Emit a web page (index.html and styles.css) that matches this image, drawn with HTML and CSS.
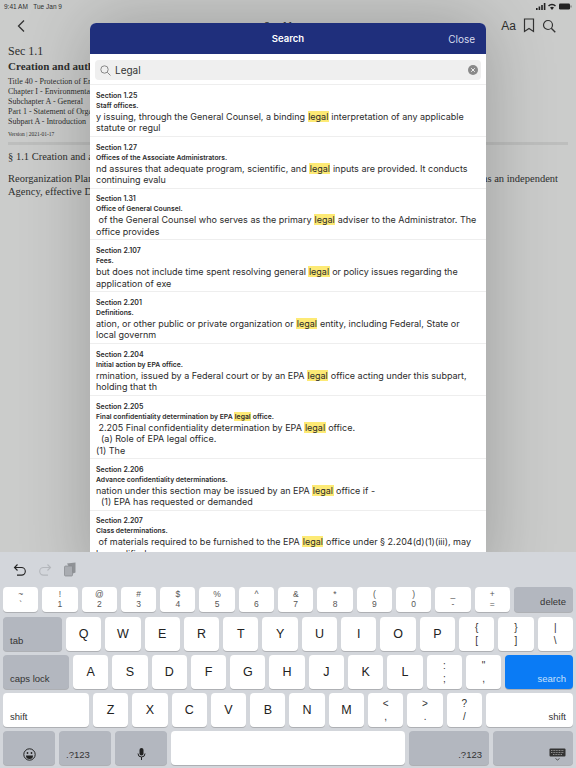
FILE: index.html
```html
<!DOCTYPE html>
<html lang="en">
<head>
    <meta charset="UTF-8">
    <meta name="viewport" content="width=device-width, initial-scale=1.0">
    <title>Search</title>
    <link rel="stylesheet" href="styles.css">
</head>
<body>

    <div class="screen">
        <!-- Reader behind the search sheet -->
        <div class="reader">
            <div class="status">
                <span>9:41 AM&nbsp;&nbsp;&nbsp;Tue Jan 9</span>
                <svg width="37" height="9" viewBox="0 0 37 9">
                    <rect x="1" y="6" width="1.6" height="2" fill="#222"/><rect x="3.6" y="4.5" width="1.6" height="3.5" fill="#222"/><rect x="6.2" y="3" width="1.6" height="5" fill="#222"/><rect x="8.8" y="1" width="1.6" height="7" fill="#222"/>
                    <path d="M13 3.4a6 6 0 0 1 8 0l-1 1.1a4.5 4.5 0 0 0-6 0zM15 5.5a3.200 3.200 0 0 1 4 0l-2 2.500z" fill="#222"/>
                    <rect x="24" y="1.500" width="11" height="6" rx="1.200" fill="#222"/><rect x="35.500" y="3.500" width="1" height="2" fill="#666"/>
                </svg>
            </div>
            <div class="nav">
                <svg width="10" height="14" viewBox="0 0 10 14"><path d="M8 1.500 2.500 7 8 12.500" fill="none" stroke="#333" stroke-width="1.300"/></svg>
                <div class="nav-title">Sec 1.1</div>
                <div class="nav-tools">
                    <span class="aa">Aa</span>
                    <svg width="12" height="15" viewBox="0 0 12 15"><path d="M1.500 1h9v12.500L6 10.500l-4.500 3z" fill="none" stroke="#333" stroke-width="1.200"/></svg>
                    <svg width="14" height="14" viewBox="0 0 14 14"><circle cx="6" cy="6" r="4.500" fill="none" stroke="#333" stroke-width="1.200"/><path d="m9.300 9.300 4 4" stroke="#333" stroke-width="1.300"/></svg>
                </div>
            </div>
            <div class="doc">
                <h2 class="sec">Sec 1.1</h2>
                <h1 class="doc-title">Creation and auth</h1>
                <div class="crumbs">
                    <div>Title 40 - Protection of En</div>
                    <div>Chapter I - Environmental</div>
                    <div>Subchapter A - General</div>
                    <div>Part 1 - Statement of Orga</div>
                    <div>Subpart A - Introduction</div>
                </div>
                <div class="version">Version | 2021-01-17</div>
                <div class="rule"></div>
                <p class="lead">§ 1.1 Creation and a</p>
                <div class="para-first">
                    <span>Reorganization Plan</span>
                    <span>as an independent</span>
                </div>
                <p class="para-last">Agency, effective De</p>
            </div>
        </div>

        <!-- Search sheet -->
        <div class="sheet">
            <div class="sheet-head">
                <span class="sheet-title">Search</span>
                <span class="sheet-close">Close</span>
            </div>
            <div class="search-wrap">
                <div class="search-box">
                    <svg width="11" height="11" viewBox="0 0 11 11"><circle cx="4.500" cy="4.500" r="3.700" fill="none" stroke="#888" stroke-width="1"/><path d="m7.300 7.300 3.200 3.200" stroke="#888" stroke-width="1"/></svg>
                    <span class="search-text">Legal</span>
                    <svg class="search-clear" width="10" height="10" viewBox="0 0 10 10"><circle cx="5" cy="5" r="5" fill="#8a8a8a"/><path d="m3.200 3.200 3.600 3.600M6.800 3.200 3.200 6.800" stroke="#eee" stroke-width="1"/></svg>
                </div>
            </div>

            <div class="result">
                <div class="r-sec">Section 1.25</div>
                <div class="r-name">Staff offices.</div>
                <div class="r-line">y issuing, through the General Counsel, a binding <mark>legal</mark> interpretation of any applicable</div>
                <div class="r-line">statute or regul</div>
            </div>
            <div class="result">
                <div class="r-sec">Section 1.27</div>
                <div class="r-name">Offices of the Associate Administrators.</div>
                <div class="r-line">nd assures that adequate program, scientific, and <mark>legal</mark> inputs are provided. It conducts</div>
                <div class="r-line">continuing evalu</div>
            </div>
            <div class="result">
                <div class="r-sec">Section 1.31</div>
                <div class="r-name">Office of General Counsel.</div>
                <div class="r-line"> of the General Counsel who serves as the primary <mark>legal</mark> adviser to the Administrator. The</div>
                <div class="r-line">office provides</div>
            </div>
            <div class="result">
                <div class="r-sec">Section 2.107</div>
                <div class="r-name">Fees.</div>
                <div class="r-line">but does not include time spent resolving general <mark>legal</mark> or policy issues regarding the</div>
                <div class="r-line">application of exe</div>
            </div>
            <div class="result">
                <div class="r-sec">Section 2.201</div>
                <div class="r-name">Definitions.</div>
                <div class="r-line">ation, or other public or private organization or <mark>legal</mark> entity, including Federal, State or</div>
                <div class="r-line">local governm</div>
            </div>
            <div class="result">
                <div class="r-sec">Section 2.204</div>
                <div class="r-name">Initial action by EPA office.</div>
                <div class="r-line">rmination, issued by a Federal court or by an EPA <mark>legal</mark> office acting under this subpart,</div>
                <div class="r-line">holding that th</div>
            </div>
            <div class="result result-tall">
                <div class="r-sec">Section 2.205</div>
                <div class="r-name">Final confidentiality determination by EPA <mark>legal</mark> office.</div>
                <div class="r-line"> 2.205 Final confidentiality determination by EPA <mark>legal</mark> office.</div>
                <div class="r-line">  (a) Role of EPA legal office.</div>
                <div class="r-line">(1) The</div>
            </div>
            <div class="result">
                <div class="r-sec">Section 2.206</div>
                <div class="r-name">Advance confidentiality determinations.</div>
                <div class="r-line">nation under this section may be issued by an EPA <mark>legal</mark> office if -</div>
                <div class="r-line">  (1) EPA has requested or demanded</div>
            </div>
            <div class="result">
                <div class="r-sec">Section 2.207</div>
                <div class="r-name">Class determinations.</div>
                <div class="r-line"> of materials required to be furnished to the EPA <mark>legal</mark> office under § 2.204(d)(1)(iii), may</div>
                <div class="r-line">be modified</div>
            </div>
        </div>

        <!-- Keyboard -->
        <div class="keyboard">
            <div class="kb-tools">
                <svg width="14" height="14" viewBox="0 0 14 14"><path d="M4.500 1.500 1.500 4.500l3 3M1.500 4.500h7a3.800 3.800 0 0 1 0 7.600H4" fill="none" stroke="#222" stroke-width="1.100"/></svg>
                <svg width="14" height="14" viewBox="0 0 14 14"><path d="m9.500 1.500 3 3-3 3M12.500 4.500h-7a3.800 3.800 0 0 0 0 7.600H10" fill="none" stroke="#b4b7bc" stroke-width="1.100"/></svg>
                <svg width="14" height="15" viewBox="0 0 14 15"><path d="M4 1.500 12.500.5v10L10 11.500z" fill="#8f9296"/><rect x="1.500" y="4" width="8" height="10" rx="1" fill="#a9acb1" stroke="#85888c" stroke-width=".7"/></svg>
            </div>
            <div class="kb-row">
                <div class="key num"><span>~</span><span>`</span></div>
                <div class="key num"><span>!</span><span>1</span></div>
                <div class="key num"><span>@</span><span>2</span></div>
                <div class="key num"><span>#</span><span>3</span></div>
                <div class="key num"><span>$</span><span>4</span></div>
                <div class="key num"><span>%</span><span>5</span></div>
                <div class="key num"><span>^</span><span>6</span></div>
                <div class="key num"><span>&amp;</span><span>7</span></div>
                <div class="key num"><span>*</span><span>8</span></div>
                <div class="key num"><span>(</span><span>9</span></div>
                <div class="key num"><span>)</span><span>0</span></div>
                <div class="key num"><span>_</span><span>-</span></div>
                <div class="key num"><span>+</span><span>=</span></div>
                <div class="key mod wide right">delete</div>
            </div>
            <div class="kb-row tall">
                <div class="key mod tab">tab</div>
                <div class="key">Q</div><div class="key">W</div><div class="key">E</div><div class="key">R</div><div class="key">T</div>
                <div class="key">Y</div><div class="key">U</div><div class="key">I</div><div class="key">O</div><div class="key">P</div>
                <div class="key num big"><span>{</span><span>[</span></div>
                <div class="key num big"><span>}</span><span>]</span></div>
                <div class="key num big"><span>|</span><span>\</span></div>
            </div>
            <div class="kb-row tall">
                <div class="key mod caps">caps lock</div>
                <div class="key">A</div><div class="key">S</div><div class="key">D</div><div class="key">F</div><div class="key">G</div>
                <div class="key">H</div><div class="key">J</div><div class="key">K</div><div class="key">L</div>
                <div class="key num big"><span>:</span><span>;</span></div>
                <div class="key num big"><span>"</span><span>,</span></div>
                <div class="key go wide right">search</div>
            </div>
            <div class="kb-row tall">
                <div class="key label shift">shift</div>
                <div class="key">Z</div><div class="key">X</div><div class="key">C</div><div class="key">V</div><div class="key">B</div>
                <div class="key">N</div><div class="key">M</div>
                <div class="key num big"><span>&lt;</span><span>,</span></div>
                <div class="key num big"><span>&gt;</span><span>.</span></div>
                <div class="key num big"><span>?</span><span>/</span></div>
                <div class="key label wide right">shift</div>
            </div>
            <div class="kb-row tall">
                <div class="key mod icon emoji">
                    <svg width="13" height="13" viewBox="0 0 13 13"><circle cx="6.500" cy="6.500" r="5.700" fill="none" stroke="#222" stroke-width="1"/><circle cx="4.500" cy="5" r=".9" fill="#222"/><circle cx="8.500" cy="5" r=".9" fill="#222"/><path d="M3 7.500h7a3.500 3.500 0 0 1-7 0z" fill="#222"/></svg>
                </div>
                <div class="key mod symbols">.?123</div>
                <div class="key mod icon mic">
                    <svg width="9" height="14" viewBox="0 0 9 14"><rect x="2.500" y="1" width="4" height="7.500" rx="2" fill="#222"/><path d="M1 6.500a3.500 3.500 0 0 0 7 0M4.500 10v3" fill="none" stroke="#222" stroke-width="1"/></svg>
                </div>
                <div class="key wide"></div>
                <div class="key mod symbols-r right">.?123</div>
                <div class="key mod icon hide">
                    <svg width="17" height="13" viewBox="0 0 17 13"><rect x=".5" y=".5" width="16" height="8" rx="1" fill="#333"/><path d="M2 2.500h13M2 4.500h13M4 6.500h9" stroke="#ccc" stroke-width=".6" stroke-dasharray="1 .6"/><path d="m6.500 10.500 2 1.500 2-1.500" fill="none" stroke="#333" stroke-width=".8"/></svg>
                </div>
            </div>
        </div>
    </div>

</body>
</html>
```
FILE: styles.css
```css
* {
    box-sizing: border-box;
}
body {
    margin: 0;
    font-family: "Inter", "Liberation Sans", sans-serif;
    background-color: #cbcccb;
}
.screen {
    width: 576px;
    height: 768px;
    position: relative;
    overflow: hidden;
    display: flex;
    flex-direction: column;
}

/* Reader behind the sheet */
.reader {
    height: 552px;
    flex: none;
    background-color: #cbcccb;
    color: #2e2f2e;
}
.status {
    height: 12px;
    padding: 1px 4px 0 4px;
    display: flex;
    justify-content: space-between;
    align-items: center;
    font-size: 6.5px;
    font-family: "Liberation Sans", sans-serif;
}
.nav {
    height: 27px;
    padding: 0 20px 0 16px;
    display: flex;
    align-items: center;
    position: relative;
}
.nav-title {
    position: absolute;
    left: 264px;
    top: 8px;
    font-size: 9px;
}
.nav-tools {
    margin-left: auto;
    display: flex;
    align-items: center;
    gap: 7px;
}
.aa {
    font-size: 12px;
    font-family: "Liberation Sans", sans-serif;
}
.doc {
    padding: 5px 8px 0 8px;
    font-family: "Liberation Serif", serif;
}
.sec {
    margin: 0;
    font-size: 12px;
    font-weight: normal;
    line-height: 14px;
}
.doc-title {
    margin: 1px 0 0 0;
    font-size: 11px;
    line-height: 14px;
}
.crumbs {
    margin-top: 3.500px;
    font-size: 8px;
    line-height: 10.100px;
}
.version {
    margin-top: 2px;
    font-size: 5.500px;
    line-height: 10px;
}
.rule {
    height: 3px;
    margin-top: 3px;
    background-color: #bdbebd;
}
.lead {
    margin: 5px 0 0 0;
    font-size: 10.500px;
    line-height: 13px;
}
.para-first {
    margin-top: 9px;
    width: 550px;
    font-size: 10.500px;
    line-height: 13px;
    display: flex;
    justify-content: space-between;
}
.para-last {
    margin: 0;
    font-size: 10.500px;
    line-height: 13px;
}

/* Search sheet */
.sheet {
    position: absolute;
    left: 90px;
    top: 23px;
    width: 396px;
    height: 560px;
    background-color: white;
    border-radius: 6px 6px 0 0;
    overflow: hidden;
    box-shadow: 0 0 70px rgba(0, 0, 0, 0.24);
}
.sheet-head {
    height: 31px;
    background-color: #1f2f7c;
    position: relative;
    display: flex;
    justify-content: center;
    align-items: center;
    color: white;
    font-size: 9.500px;
}
.sheet-title {
    font-weight: 600;
}
.sheet-close {
    position: absolute;
    right: 11px;
    font-size: 10px;
    color: #d7dbec;
}
.search-wrap {
    height: 31px;
    padding: 6px 5px 5px 5px;
    border-bottom: 1px solid #eeeeee;
}
.search-box {
    height: 20px;
    padding: 0 3px 0 5px;
    background-color: #efefef;
    border-radius: 4px;
    display: flex;
    align-items: center;
    gap: 4px;
    font-size: 10px;
    color: #333;
}
.search-clear {
    margin-left: auto;
}
.result {
    padding: 5.800px 6px 0 6px;
    height: 51.800px;
    border-bottom: 1px solid #eeeeee;
    color: #2b2b2b;
}
.result-tall {
    height: 63px;
}
.r-sec {
    font-size: 7px;
    font-weight: 600;
    line-height: 10px;
}
.r-name {
    font-size: 6.800px;
    font-weight: 600;
    line-height: 10px;
}
.r-line {
    font-size: 9px;
    line-height: 11.500px;
    white-space: pre;
}
mark {
    background-color: #fdea75;
    color: inherit;
    padding: 0 0.500px;
}

/* Keyboard */
.keyboard {
    flex: 1;
    position: relative;
    z-index: 5;
    background-color: #d3d6db;
    padding: 0 3px;
    font-family: "Liberation Sans", sans-serif;
}
.kb-tools {
    height: 35px;
    padding-left: 10px;
    display: flex;
    align-items: center;
    gap: 11px;
}
.kb-row {
    height: 25px;
    display: flex;
    gap: 4px;
    margin-bottom: 5px;
}
.kb-row.tall {
    height: 34px;
    margin-bottom: 4px;
}
.key {
    width: 35.300px;
    flex: none;
    background-color: white;
    border-radius: 4px;
    box-shadow: 0 1px 0 #aeb0b4;
    display: flex;
    justify-content: center;
    align-items: center;
    font-size: 12.500px;
    color: #222;
}
.key.num {
    flex-direction: column;
    gap: 1px;
    font-size: 8.500px;
    line-height: 9px;
    color: #555;
}
.key.num.big {
    font-size: 10px;
    line-height: 12px;
    color: #333;
}
.key.mod, .key.label, .key.go {
    align-items: flex-end;
    justify-content: flex-start;
    padding: 0 7px 5px 7px;
    font-size: 9.500px;
    color: #333;
}
.key.mod {
    background-color: #b3b7bf;
}
.key.go {
    background-color: #0a7bf5;
    color: #c7e0fb;
}
.wide {
    flex: 1;
}
.key.right {
    justify-content: flex-end;
}
.key.icon {
    padding-bottom: 4px;
    justify-content: center;
}
.tab {
    width: 59px;
}
.caps {
    width: 66px;
}
.shift {
    width: 86px;
}
.emoji, .symbols, .mic {
    width: 52px;
}
.symbols-r, .hide {
    width: 80px;
}
.key.hide {
    justify-content: flex-end;
}
```
